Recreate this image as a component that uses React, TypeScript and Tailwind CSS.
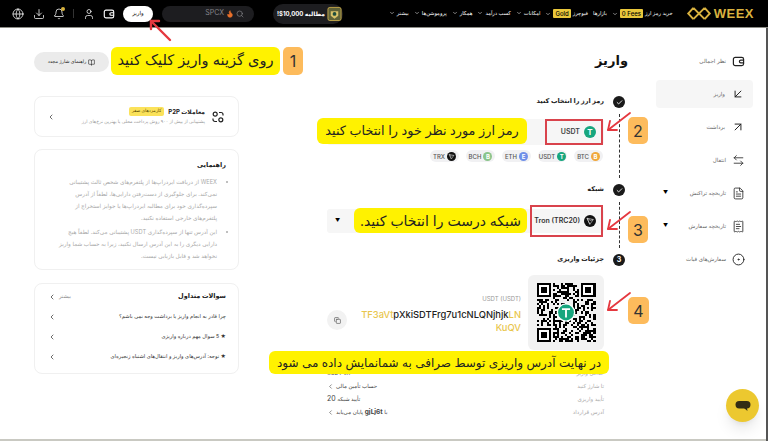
import type { ReactNode } from 'react';
import { ArrowDownLeft, ArrowLeftRight, ArrowUpRight, BookOpen, Check, ChevronDown, ChevronLeft, CircleDot, Copy, FileText, Globe, Search, Bell, User, ReceiptText, Download, Flame } from 'lucide-react';

function WalletIcon({ size, className }: { size: number; className?: string }) {
    return (
        <svg viewBox="0 0 14 14" width={size} height={size} className={className} fill="none" stroke="currentColor" strokeWidth="1.3">
            <rect x="1.5" y="2.500" width="11" height="9" rx="2" />
            <path d="M12.500 5.500H9.500a1.500 1.500 0 0 0 0 3h3" />
        </svg>
    );
}

function Arrow({ className }: { className: string }) {
    return (
        <svg viewBox="0 0 25 20" className={className} fill="none" stroke="#e5383f" strokeWidth="1.8" strokeLinecap="round" strokeLinejoin="round">
            <path d="M24 1 L2 18" />
            <path d="M4 9 L2 18 L11 18" />
        </svg>
    );
}

function TronCoin({ size }: { size: number }) {
    return (
        <svg viewBox="0 0 12 12" width={size} height={size} className="shrink-0">
            <circle cx="6" cy="6" r="6" fill="#111" />
            <path d="M3 3.200 L9.300 4.500 L5.800 9.300 Z M3 3.200 L5.800 9.300 M9.300 4.500 L6.300 5.400 L3 3.200" fill="none" stroke="#ddd" strokeWidth="0.6" strokeLinejoin="round" />
        </svg>
    );
}

function Coin({ bg, label }: { bg: string; label: string }) {
    return <span className={`w-[9px] h-[9px] rounded-full shrink-0 ${bg} text-white text-[6px] leading-[9px] text-center font-bold`}>{label}</span>;
}

function Chip({ name, coin }: { name: string; coin: ReactNode }) {
    return (
        <div className="h-[12px] w-[29px] rounded-full bg-[#f1f1f3] flex items-center justify-center gap-[2px] text-[6px] font-medium text-[#555]" dir="ltr">
            <span>{name}</span>{coin}
        </div>
    );
}

const navItems = [
    { label: 'بیشتر', chevron: true },
    { label: 'پروموشن‌ها', chevron: true },
    { label: 'همکار', chevron: true },
    { label: 'کسب درآمد', chevron: true },
    { label: 'امکانات', chevron: true },
    { label: 'فیوچرز', chevron: true, badge: 'Gold' },
    { label: 'بازارها', chevron: false },
    { label: 'خرید رمز ارز', chevron: true, badge: '0 Fees' },
];

function Header() {
    return (
        <header className="h-[28px] shrink-0 bg-black flex items-center pl-[12px] pr-[14px] border-b border-[#8d8d86]" dir="ltr">
            <div className="flex items-center text-white shrink-0">
                <Globe size={12} strokeWidth={1.5} className="mr-[9px]" />
                <Download size={12} strokeWidth={1.5} className="mr-[8px]" />
                <div className="relative mr-[8px]">
                    <Bell size={12} strokeWidth={1.5} />
                    <span className="absolute -top-[1px] right-0 w-[4px] h-[4px] rounded-full bg-[#d8b33d]" />
                </div>
                <div className="w-px h-[9px] bg-[#333] mr-[9px]" />
                <User size={12} strokeWidth={1.5} className="mr-[8px]" />
                <WalletIcon size={12} className="mr-[8px]" />
                <div className="w-[30px] h-[16px] rounded-full bg-white text-black text-[5.5px] flex items-center justify-center mr-[9px]">واریز</div>
                <div className="w-[92px] h-[16px] rounded-full bg-[#1d1d20] flex items-center justify-end pr-[10px] gap-[2px] text-[#85858a] text-[7px] mr-[19px]">
                    <span>SPCX</span>
                    <Flame size={8} className="text-[#e8702a] fill-[#e8702a]" />
                    <Search size={8} />
                </div>
                <div className="w-[70px] h-[20px] rounded-full bg-[#1d1d20] flex items-center justify-end gap-[2px] pr-[1px]">
                    <span className="text-[6px] font-bold whitespace-nowrap" dir="ltr">!$10,000 مطالبه</span>
                    <svg viewBox="0 0 16 17" className="w-[15px] h-[17px] shrink-0">
                        <rect x="1" y="2" width="14" height="14" rx="2" fill="#5f6238" stroke="#c5a94a" />
                        <path d="M4 6h8v5l-4 3-4-3z" fill="#d8c26a" />
                        <circle cx="8" cy="9" r="2" fill="#1d4d3c" />
                    </svg>
                </div>
            </div>
            <nav className="flex items-center flex-1 justify-end gap-[5px] text-white text-[5.2px] whitespace-nowrap">
                {navItems.map(item => (
                    <div key={item.label} className="flex items-center gap-[2px]">
                        {item.chevron && <ChevronDown size={6} />}
                        {item.badge && <span className="bg-[#e9c73b] text-black text-[6px] font-medium px-[2px] rounded-[1px]">{item.badge}</span>}
                        <span>{item.label}</span>
                    </div>
                ))}
                <div className="flex items-center gap-[2px] ml-[8px] text-[#d9b23f] font-bold">
                    <svg viewBox="0 0 26 16" className="w-[26px] h-[15px]" fill="none" stroke="#d9b23f" strokeWidth="2">
                        <path d="M7 2 L1.500 8 L7 14 M19 2 L24.500 8 L19 14 M7 2 L13 8 L7 14 M19 2 L13 8 L19 14" />
                    </svg>
                    <span className="text-[13px] font-['Liberation_Sans'] tracking-[0.5px]">WEEX</span>
                </div>
            </nav>
        </header>
    );
}

const sideItems = [
    { label: 'نظر اجمالی', icon: <WalletIcon size={13} /> },
    { label: 'واریز', icon: <ArrowDownLeft size={14} strokeWidth={1.7} />, active: true },
    { label: 'برداشت', icon: <ArrowUpRight size={14} strokeWidth={1.7} /> },
    { label: 'انتقال', icon: <ArrowLeftRight size={13} strokeWidth={1.5} /> },
    { label: 'تاریخچه تراکنش', icon: <FileText size={13} strokeWidth={1.5} />, caret: true },
    { label: 'تاریخچه سفارش', icon: <ReceiptText size={13} strokeWidth={1.5} />, caret: true },
    { label: 'سفارش‌های فیات', icon: <CircleDot size={13} strokeWidth={1.7} /> },
];

function Sidebar() {
    return (
        <aside className="w-[120px] shrink-0 border-r border-[#f0f0f0] flex flex-col pt-[19px] pl-[8px] pr-[14px] gap-[5px] text-[#666]" dir="rtl">
            {sideItems.map(({ label, icon, active, caret }) => (
                <div key={label} className={`h-[28px] rounded-[4px] flex items-center gap-[6px] pr-[8px] text-[5.5px] ${active ? 'bg-[#f6f6f6]' : ''}`}>
                    <span className="text-[#222] shrink-0">{icon}</span>
                    <span>{label}</span>
                    {caret && <span className="mr-auto ml-[7px] text-[5px] text-black">▼</span>}
                </div>
            ))}
        </aside>
    );
}

function StepBadge({ children }: { children: ReactNode }) {
    return <span className="w-[12px] h-[12px] rounded-full bg-[#1a1a1a] text-white text-[7px] font-bold flex items-center justify-center shrink-0">{children}</span>;
}

function Step({ mark, title }: { mark: ReactNode; title: string }) {
    return (
        <div className="flex items-center gap-[9px] h-[12px]">
            <StepBadge>{mark}</StepBadge>
            <span className="text-[6.5px] font-bold text-[#222]">{title}</span>
        </div>
    );
}

function Connector() {
    return (
        <div className="w-[12px] shrink-0 flex justify-center py-[6px]">
            <div className="border-r border-dashed border-[#333]" />
        </div>
    );
}

// pseudo random speckle for the qr body, finder squares go on top
const qrCells: [number, number][] = [];
let qrSeed = 20240611;
for (let y = 0; y < 29; y++) {
    for (let x = 0; x < 29; x++) {
        qrSeed = (Math.imul(qrSeed, 1664525) + 1013904223) | 0;
        const inFinder = (x < 8 && y < 8) || (x > 20 && y < 8) || (x < 8 && y > 20);
        if (!inFinder && qrSeed >>> 31 === 1) qrCells.push([x, y]);
    }
}

function QrCode() {
    return (
        <svg viewBox="0 0 29 29" className="w-full h-full" shapeRendering="crispEdges">
            {qrCells.map(([x, y]) => <rect key={`${x}-${y}`} x={x} y={y} width="1" height="1" fill="#000" />)}
            {[[0, 0], [22, 0], [0, 22]].map(([x, y]) => (
                <g key={`${x}-${y}`}>
                    <rect x={x} y={y} width="7" height="7" fill="#000" />
                    <rect x={x + 1} y={y + 1} width="5" height="5" fill="#fff" />
                    <rect x={x + 2} y={y + 2} width="3" height="3" fill="#000" />
                </g>
            ))}
            <g shapeRendering="auto">
                <circle cx="14.500" cy="14.500" r="4.600" fill="#fff" />
                <circle cx="14.500" cy="14.500" r="3.900" fill="#17a67e" />
                <path d="M12.500 12.800h4M14.500 12.800v4.200" stroke="#fff" strokeWidth="0.9" fill="none" />
            </g>
        </svg>
    );
}

function Main() {
    return (
        <main className="w-[409px] shrink-0 pr-[23px] flex flex-col" dir="rtl">
            <h1 className="text-[13px] font-bold text-[#111] leading-[20px] mt-[22px] -mr-[3px] h-[20px]">واریز</h1>

            <div className="mt-[26px]"><Step mark={<Check size={7} strokeWidth={3} />} title="رمز ارز را انتخاب کنید" /></div>
            <div className="flex gap-[9px] h-[76px]">
                <Connector />
                <div className="w-[277px] pt-[11px]">
                    <div className="h-[26px] rounded-[3px] bg-[#f6f6f6] flex items-center gap-[4px] pr-[8px] text-[7px] font-semibold text-[#444]">
                        <span className="w-[12px] h-[12px] rounded-full bg-[#17a67e] text-white text-[8px] leading-[12px] text-center font-bold">T</span>
                        <span>USDT</span>
                    </div>
                    <div className="flex gap-[7px] mt-[5px] pr-[1px]">
                        <Chip name="BTC" coin={<Coin bg="bg-[#f0a73a]" label="B" />} />
                        <Chip name="USDT" coin={<Coin bg="bg-[#17a67e]" label="T" />} />
                        <Chip name="ETH" coin={<Coin bg="bg-[#6f8fe8]" label="E" />} />
                        <Chip name="BCH" coin={<Coin bg="bg-[#8ac48a]" label="B" />} />
                        <Chip name="TRX" coin={<TronCoin size={9} />} />
                    </div>
                </div>
            </div>

            <Step mark={<Check size={7} strokeWidth={3} />} title="شبکه" />
            <div className="flex gap-[9px] h-[58px]">
                <Connector />
                <div className="w-[277px] pt-[13px]">
                    <div className="h-[24px] rounded-[3px] bg-[#f6f6f6] flex items-center justify-between pr-[8px] pl-[8px] text-[7px] font-semibold text-[#333]">
                        <div className="flex items-center gap-[4px]">
                            <TronCoin size={12} />
                            <span dir="ltr">Tron (TRC20)</span>
                        </div>
                        <span className="text-[5px] text-black">▼</span>
                    </div>
                </div>
            </div>

            <Step mark="3" title="جزئیات واریزی" />
            <div className="flex mr-[21px] mt-[9px] w-[277px]">
                <div className="w-[76px] h-[75px] shrink-0 rounded-[6px] bg-[#f2f2f2] p-[8px]">
                    <QrCode />
                </div>
                <div className="flex-1 flex items-start justify-between pt-[20px] pr-[7px]">
                    <div className="text-right" dir="ltr">
                        <div className="text-[6px] text-[#999] leading-[8px]">USDT (USDT)</div>
                        <div className="text-[9.400px] font-medium text-[#222] leading-[13px] mt-[5px]" dir="ltr">
                            <span className="text-[#e9c64d]">TF3aVt</span>pXkiSDTFrg7u1cNLQNjhjk<span className="text-[#e9c64d]">LN</span><br />
                            <span className="text-[#e9c64d]">KuQV</span>
                        </div>
                    </div>
                    <div className="w-[20px] h-[20px] rounded-full bg-[#f2f2f2] flex items-center justify-center mt-[15px]">
                        <Copy size={7} className="text-[#444]" />
                    </div>
                </div>
            </div>
            <div className="mt-[17px] mr-[21px] w-[277px] flex flex-col text-[5.5px]">
                <Row label="حداقل واریز"><span>USDT 0.1</span></Row>
                <Row label="تا شارژ کنید"><span>حساب تأمین مالی</span><ChevronLeft size={7} /></Row>
                <Row label="تأیید واریزی"><span>تأیید شبکه <span className="text-[7px]">20</span></span></Row>
                <Row label="آدرس قرارداد"><span>با <b className="text-[6.5px]">gjLj6t</b> پایان می‌یابد</span><ChevronLeft size={7} /></Row>
            </div>
        </main>
    );
}

function Row({ label, children }: { label: string; children: ReactNode }) {
    return (
        <div className="flex justify-between items-center h-[13px]">
            <span className="text-[#aaa]">{label}</span>
            <span className="flex items-center gap-[2px] text-[#444]">{children}</span>
        </div>
    );
}

const faqs = ['چرا قادر به انجام واریز یا برداشت وجه نمی باشم؟', '★ 5 سوال مهم درباره واریزی', '★ توجه: آدرس‌های واریز و انتقال‌های اشتباه زنجیره‌ای'];

function LeftColumn() {
    return (
        <section className="w-[205px] shrink-0 flex flex-col" dir="rtl">
            <div className="mt-[24px] self-end w-[75px] h-[20px] rounded-full bg-[#ebebeb] flex items-center justify-center gap-[2px] text-[4.8px] text-[#222]">
                <BookOpen size={7} />
                <span>راهنمای شارژ مجدد</span>
            </div>
            <div className="mt-[24px] h-[41px] rounded-[8px] border border-[#f0f0f0] flex items-center pr-[14px] pl-[12px]">
                <svg viewBox="0 0 12 12" className="w-[12px] h-[12px] shrink-0" fill="none" stroke="#222" strokeWidth="1.2"><circle cx="3.2" cy="3.2" r="2" /><circle cx="8.8" cy="8.8" r="2" /><path d="M7 1.500h2a2 2 0 0 1 2 2v1M5 10.500H3a2 2 0 0 1-2-2v-1" /></svg>
                <div className="mr-[7px] flex-1">
                    <div className="flex items-center gap-[4px]">
                        <span className="text-[6px] font-bold text-[#222]">معاملات P2P</span>
                        <span className="text-[4.5px] px-[3px] py-[1px] rounded-[2px] bg-[#fbe25a] text-[#5b4b00]">کارمزدهای صفر</span>
                    </div>
                    <div className="text-[4.6px] text-[#999] mt-[3px] whitespace-nowrap">پشتیبانی از بیش از ۹۰۰ روش پرداخت محلی با بهترین نرخ‌های ارز</div>
                </div>
                <ChevronLeft size={8} className="text-[#222]" />
            </div>
            <div className="mt-[12px] h-[121px] rounded-[8px] border border-[#f0f0f0] pr-[12px] pl-[18px] pt-[8px]">
                <div className="text-[6.5px] font-bold text-[#222] leading-[14px]">راهنمایی</div>
                <ul className="mt-[4px] list-disc pr-[9px] text-[5.7px] leading-[12px] text-[#aaa]">
                    <li>WEEX از دریافت ایردراپ‌ها از پلتفرم‌های شخص ثالث پشتیبانی نمی‌کند. برای جلوگیری از دست‌رفتن دارایی‌ها، لطفاً از آدرس سپرده‌گذاری خود برای مطالبه ایردراپ‌ها یا جوایز استخراج از پلتفرم‌های خارجی استفاده نکنید.</li>
                    <li className="mt-[2px]">این آدرس تنها از سپرده‌گذاری USDT پشتیبانی می‌کند. لطفاً هیچ دارایی دیگری را به این آدرس ارسال نکنید، زیرا به حساب شما واریز نخواهد شد و قابل بازیابی نیست.</li>
                </ul>
            </div>
            <div className="mt-[13px] h-[91px] rounded-[8px] border border-[#f0f0f0] pr-[12px] pl-[13px] pt-[3px] text-[5.2px] text-[#333]">
                <div className="flex justify-between items-center h-[20px]">
                    <span className="text-[6.5px] font-bold text-[#222]">سوالات متداول</span>
                    <span className="flex items-center gap-[3px] text-[#888]">بیشتر <ChevronLeft size={8} className="text-[#222]" /></span>
                </div>
                {faqs.map(q => (
                    <div key={q} className="flex justify-between items-center h-[20px]">
                        <span className="whitespace-nowrap">{q}</span>
                        <ChevronLeft size={8} className="text-[#222]" />
                    </div>
                ))}
            </div>
        </section>
    );
}

function NumberTag({ className, children }: { className: string; children: string }) {
    return <div className={`absolute rounded-[5px] bg-[#fdbb5c] text-[16px] flex items-center justify-center text-[#333] ${className}`}>{children}</div>;
}

function Callout({ className, children }: { className: string; children: string }) {
    return <div className={`absolute rounded-[6px] bg-[#fff200] flex items-center justify-center text-[#222] whitespace-nowrap ${className}`} dir="rtl">{children}</div>;
}

export default function App() {
    return (
        <div className="relative w-[768px] h-[441px] bg-white overflow-hidden flex flex-col font-['Inter','DejaVu_Sans',sans-serif]">
            <Header />
            <div className="flex flex-1 pl-[34px]" dir="ltr">
                <LeftColumn />
                <Main />
                <Sidebar />
            </div>
            <div className="h-[2px] bg-[#c9c9c2] shrink-0" />
            <div className="absolute right-0 top-[28px] bottom-0 w-[2px] bg-[#555]" />

            {/* annotations laid over the page */}
            <svg viewBox="0 0 24 24" className="absolute left-[148px] top-[18px] w-[24px] h-[24px]" fill="none" stroke="#e5383f" strokeWidth="2.4" strokeLinecap="round" strokeLinejoin="round">
                <path d="M22 22 L3 3" />
                <path d="M3 11 V3 H11" />
            </svg>
            <Callout className="left-[111px] top-[47px] w-[169px] h-[28px] text-[14.6px]">روی گزینه واریز کلیک کنید</Callout>
            <NumberTag className="left-[283px] top-[47px] w-[20px] h-[28px]">1</NumberTag>

            <Callout className="left-[317px] top-[118px] w-[210px] h-[26px] text-[12.8px]">رمز ارز مورد نظر خود را انتخاب کنید</Callout>
            <div className="absolute left-[545px] top-[119px] w-[58px] h-[26px] border-2 border-[#d9434c]" />
            <Arrow className="absolute left-[606px] top-[112px] w-[25px] h-[20px]" />
            <NumberTag className="left-[628px] top-[117px] w-[20px] h-[27px]">2</NumberTag>

            <Callout className="left-[354px] top-[208px] w-[173px] h-[25px] text-[14px]">شبکه درست را انتخاب کنید.</Callout>
            <div className="absolute left-[530px] top-[205px] w-[73px] h-[32px] border-2 border-[#d9434c]" />
            <Arrow className="absolute left-[606px] top-[211px] w-[25px] h-[20px]" />
            <NumberTag className="left-[628px] top-[216px] w-[20px] h-[27px]">3</NumberTag>

            <Arrow className="absolute left-[606px] top-[292px] w-[25px] h-[20px]" />
            <NumberTag className="left-[628px] top-[297px] w-[21px] h-[27px]">4</NumberTag>

            <Callout className="left-[269px] top-[351px] w-[340px] h-[23px] text-[12px]">در نهایت آدرس واریزی توسط صرافی به شمانمایش داده می شود</Callout>

            <div className="absolute left-[726px] top-[389px] w-[33px] h-[33px] rounded-full bg-[#ecc82f] shadow-lg flex items-center justify-center">
                <svg viewBox="0 0 16 12" className="w-[16px] h-[12px]" fill="#332c14">
                    <rect x="0.5" y="1" width="15" height="7.500" rx="3.700" />
                    <path d="M9 8h3l0.500 3z" />
                </svg>
            </div>
        </div>
    );
}
